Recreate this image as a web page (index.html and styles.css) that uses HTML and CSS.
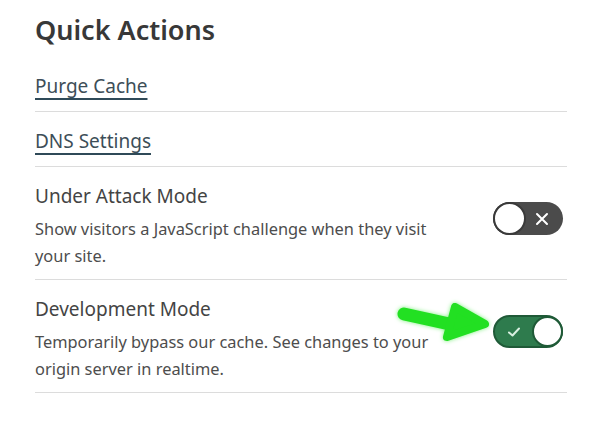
FILE: index.html
```html
<!DOCTYPE html>
<html>
<head>
<meta charset="utf-8">
<link rel="stylesheet" href="styles.css">
</head>
<body>
<div class="panel">
  <h1 class="title">Quick Actions</h1>
  <ul class="list">
    <li class="item"><a class="link" href="#">Purge Cache</a></li>
    <li class="item"><a class="link" href="#">DNS Settings</a></li>
    <li class="item setting">
      <div class="text">
        <div class="name">Under Attack Mode</div>
        <div class="desc">Show visitors a JavaScript challenge when they visit your site.</div>
      </div>
      <div class="toggle off">
        <span class="knob"></span>
        <svg class="mark" width="14" height="14" viewBox="0 0 14 14"><path d="M2 2 L12 12 M12 2 L2 12" stroke="#fff" stroke-width="2" stroke-linecap="round"/></svg>
      </div>
    </li>
    <li class="item setting">
      <div class="text">
        <div class="name">Development Mode</div>
        <div class="desc">Temporarily bypass our cache. See changes to your origin server in realtime.</div>
      </div>
      <div class="toggle on">
        <svg class="mark" width="14" height="12" viewBox="0 0 14 12"><path d="M2 6.5 L5.5 9.5 L12 2.5" fill="none" stroke="#d8efe0" stroke-width="2" stroke-linecap="round" stroke-linejoin="round"/></svg>
        <span class="knob"></span>
      </div>
    </li>
  </ul>
  <svg class="arrow" width="110" height="60" viewBox="0 0 110 60">
    <path d="M14 19 L64 30" stroke="#22e022" stroke-width="13" stroke-linecap="round"/>
    <path d="M65 12 L57 42 L95 29 Z" fill="#22e022" stroke="#22e022" stroke-width="8" stroke-linejoin="round"/>
  </svg>
</div>
</body>
</html>
```

FILE: styles.css
```css
* { box-sizing: border-box; }
html, body { margin: 0; padding: 0; background: #fff; }
body {
  font-family: "Noto Sans", "Open Sans", sans-serif;
  color: #444;
  width: 600px;
  height: 434px;
  overflow: hidden;
}
.panel {
  position: relative;
  padding: 14px 33px 0 35px;
}
.title {
  margin: 0 0 11px 0;
  font-size: 27px;
  line-height: 32px;
  font-weight: 600;
  color: #383838;
}
.list {
  list-style: none;
  margin: 0;
  padding: 0;
}
.item {
  padding: 18px 0 14px 0;
  border-bottom: 1px solid #dcdcdc;
  line-height: 22px;
  font-size: 19px;
}
.link {
  color: #3d4e58;
  text-decoration: underline;
  text-decoration-color: #2f4a58;
  text-decoration-thickness: 2px;
  text-underline-offset: 5px;
}
.setting {
  display: flex;
  align-items: flex-start;
  justify-content: space-between;
  padding-bottom: 10px;
}
.text { width: 400px; }
.name {
  font-size: 19px;
  line-height: 22px;
  color: #444;
}
.desc {
  margin-top: 9px;
  font-size: 16.4px;
  line-height: 26.5px;
  color: #4d4d4d;
}
.toggle {
  margin-top: 17px;
  margin-right: 4px;
  width: 70px;
  height: 33px;
  border-radius: 17px;
  display: flex;
  align-items: center;
  justify-content: space-between;
  flex-shrink: 0;
}
.toggle.off {
  background: #4b4b4b;
  padding: 0 14px 0 0;
}
.toggle.off .knob {
  width: 33px;
  height: 33px;
  border-radius: 50%;
  background: #fff;
  border: 2px solid #3a3a3a;
}
.toggle.on {
  background: #2e7b4d;
  border: 2px solid #1f5a37;
  padding: 0 0 0 12px;
}
.toggle.on .knob {
  width: 31px;
  height: 31px;
  margin-right: -2px;
  border-radius: 50%;
  background: #fff;
  border: 2px solid #1f5a37;
}
.mark { display: block; }
.arrow {
  position: absolute;
  left: 390px;
  top: 295px;
  filter: drop-shadow(0 0 2px #7df07d);
}
```
